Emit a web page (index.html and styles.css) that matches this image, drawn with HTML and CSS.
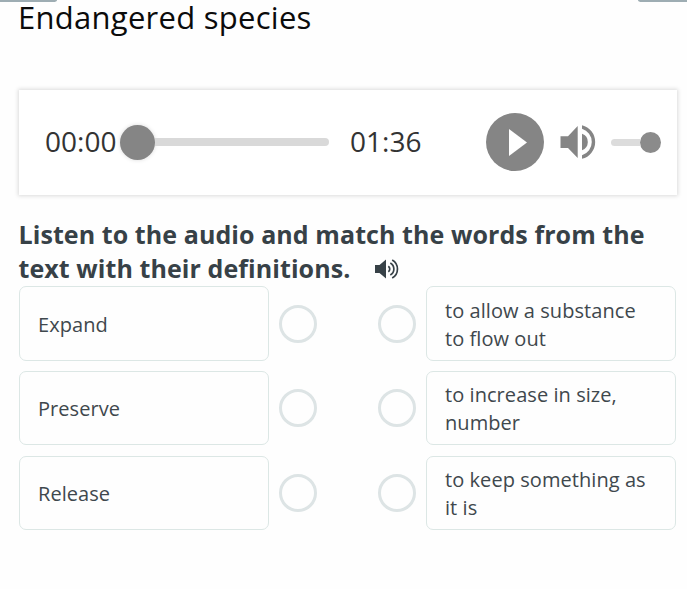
FILE: index.html
```html
<!DOCTYPE html>
<html lang="en">
<head>
<meta charset="utf-8">
<title>Endangered species</title>
<link rel="stylesheet" href="styles.css">
</head>
<body>
<div class="top-tabs"><span class="tab tab-left"></span><span class="tab tab-right"></span></div>
<main>
  <h1>Endangered species</h1>
  <section class="player">
    <span class="time">00:00</span>
    <div class="seek"><span class="seek-knob"></span><span class="seek-track"></span></div>
    <span class="time total">01:36</span>
    <svg class="play" viewBox="0 0 58 58"><circle cx="29" cy="29" r="29" fill="#858585"/><path d="M23 16v27l18-13.500z" fill="#fff"/></svg>
    <svg class="speaker" viewBox="0 0 36 36" fill="#858585"><path d="M0.500 12.300h7.500L17.700 2v32L8 24H0.500z"/><path d="M22 9.800a8.700 8.700 0 0 1 0 16.400z"/><path d="M22 1.200a17.300 17.300 0 0 1 0 33.600v-3.600a13.800 13.800 0 0 0 0-26.400z"/></svg>
    <div class="volume"><span class="volume-track"></span><span class="volume-knob"></span></div>
  </section>
  <h2>Listen to the audio and match the words from the<br>text with their definitions.<svg class="listen" viewBox="0 0 24 20"><path d="M0 6h4.500L11 0.500v19L4.500 14H0z" fill="#374147"/><path d="M13.300 7.200a3.400 3.400 0 0 1 0 5.600M15.300 3.900a7 7 0 0 1 0 12.200M17.200 0.900a10.500 10.500 0 0 1 0 18.200" fill="none" stroke="#374147" stroke-width="1.700"/></svg></h2>
  <section class="matches">
    <div class="row"><div class="card">Expand</div><span class="dot"></span><span class="dot right"></span><div class="card">to allow a substance<br>to flow out</div></div>
    <div class="row"><div class="card">Preserve</div><span class="dot"></span><span class="dot right"></span><div class="card">to increase in size,<br>number</div></div>
    <div class="row"><div class="card">Release</div><span class="dot"></span><span class="dot right"></span><div class="card">to keep something as<br>it is</div></div>
  </section>
</main>
</body>
</html>
```
FILE: styles.css
```css
* { box-sizing: border-box; }
body { margin: 0; height: 589px; overflow: hidden; background: #fefefe; color: #3f484d; font-family: "Open Sans", sans-serif; }
main { padding: 0 10px 0 19px; }
.top-tabs { display: flex; justify-content: space-between; height: 2px; }
.tab { height: 2px; background: #9eadb3; }
.tab-left { width: 57px; border-bottom-right-radius: 4px 2px; }
.tab-right { width: 49px; border-bottom-left-radius: 4px 2px; }
h1 { margin: 0 0 0 -1px; height: 88px; font-size: 31px; letter-spacing: .27px; font-weight: 400; line-height: 30px; color: #0b0b0b; }
.player { display: flex; align-items: center; width: 658px; height: 105px; padding: 0 0 1px 26px; background: #fff; box-shadow: 0 0 4px 1px rgba(0, 0, 0, .14); }
.time { width: 75px; padding-bottom: 2px; font-size: 28px; line-height: 38px; color: #333; }
.total { margin-left: 21px; width: 136px; }
.seek { display: flex; align-items: center; width: 209px; }
.seek-knob { width: 35px; height: 35px; border-radius: 50%; background: #858585; box-shadow: 0 0 4px rgba(0, 0, 0, .15); }
.seek-track { flex: 1; height: 8px; background: #d9d9d9; border-radius: 0 4px 4px 0; }
.play { width: 58px; height: 58px; }
.speaker { width: 36px; height: 36px; margin-left: 16px; }
.volume { display: flex; align-items: center; margin-left: 15px; }
.volume-track { width: 29px; height: 7px; border-radius: 4px 0 0 4px; background: #dcdcdc; }
.volume-knob { width: 21px; height: 21px; border-radius: 50%; background: #8b8b8b; }
h2 { margin: 22px 0 1px -.5px; height: 68px; font-size: 25px; letter-spacing: .08px; line-height: 34px; font-weight: 700; color: #374147; white-space: nowrap; }
.listen { width: 24px; height: 20px; margin-left: 25px; vertical-align: -1px; }
.matches { display: grid; row-gap: 10px; grid-template-rows: 75px 74px 75px; }
.row { display: flex; align-items: center; }
.row:last-child { padding-top: 1px; }
.card { display: flex; align-items: center; width: 250px; height: 100%; padding: 2px 18px 0; border: 1px solid #dce7e5; border-radius: 7px; font-size: 20px; letter-spacing: .06px; line-height: 28px; white-space: nowrap; background: #fefefe; }
.dot { width: 38px; height: 38px; margin-left: 10px; border: 3px solid #dde4e5; border-radius: 50%; }
.dot.right { margin: 0 10px 0 61px; }
```
